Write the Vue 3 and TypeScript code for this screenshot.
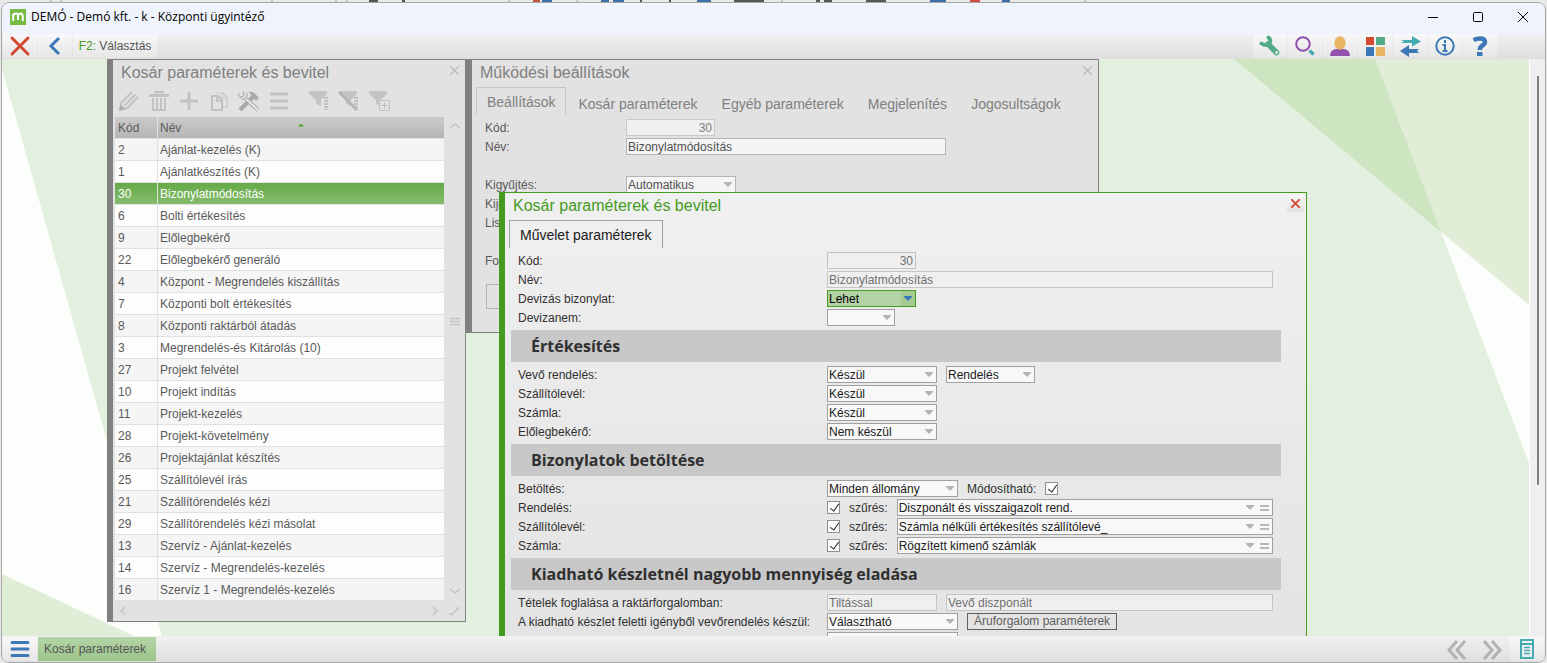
<script setup lang="ts">
import { reactive, ref } from 'vue'

interface Item { code: number; name: string }
interface Field {
  kind: 'text' | 'select' | 'lookup' | 'check' | 'button' | 'label'
  value?: string
  size?: string
  disabled?: boolean
  active?: boolean
  right?: boolean
}
interface Row { label: string; fields: Field[] }
interface Section { title?: string; rows: Row[] }

const items: Item[] = [
  { code: 2, name: 'Ajánlat-kezelés (K)' },
  { code: 1, name: 'Ajánlatkészítés (K)' },
  { code: 30, name: 'Bizonylatmódosítás' },
  { code: 6, name: 'Bolti értékesítés' },
  { code: 9, name: 'Előlegbekérő' },
  { code: 22, name: 'Előlegbekérő generáló' },
  { code: 4, name: 'Központ - Megrendelés kiszállítás' },
  { code: 7, name: 'Központi bolt értékesítés' },
  { code: 8, name: 'Központi raktárból átadás' },
  { code: 3, name: 'Megrendelés-és Kitárolás (10)' },
  { code: 27, name: 'Projekt felvétel' },
  { code: 10, name: 'Projekt indítás' },
  { code: 11, name: 'Projekt-kezelés' },
  { code: 28, name: 'Projekt-követelmény' },
  { code: 26, name: 'Projektajánlat készítés' },
  { code: 25, name: 'Szállítólevél írás' },
  { code: 21, name: 'Szállítórendelés kézi' },
  { code: 29, name: 'Szállítórendelés kézi másolat' },
  { code: 13, name: 'Szervíz - Ajánlat-kezelés' },
  { code: 14, name: 'Szervíz - Megrendelés-kezelés' },
  { code: 16, name: 'Szervíz 1 - Megrendelés-kezelés' },
]
const selected = ref(30)

const tabs = ['Beállítások', 'Kosár paraméterek', 'Egyéb paraméterek', 'Megjelenítés', 'Jogosultságok']
const tab = ref('Beállítások')

const sections = reactive<Section[]>([
  {
    rows: [
      { label: 'Kód:', fields: [{ kind: 'text', value: '30', size: 's', disabled: true, right: true }] },
      { label: 'Név:', fields: [{ kind: 'text', value: 'Bizonylatmódosítás', size: 'full', disabled: true }] },
      { label: 'Devizás bizonylat:', fields: [{ kind: 'select', value: 'Lehet', size: 's', active: true }] },
      { label: 'Devizanem:', fields: [{ kind: 'select', value: '', size: 'xs' }] },
    ],
  },
  {
    title: 'Értékesítés',
    rows: [
      { label: 'Vevő rendelés:', fields: [{ kind: 'select', value: 'Készül', size: 'm' }, { kind: 'select', value: 'Rendelés', size: 's' }] },
      { label: 'Szállítólevél:', fields: [{ kind: 'select', value: 'Készül', size: 'm' }] },
      { label: 'Számla:', fields: [{ kind: 'select', value: 'Készül', size: 'm' }] },
      { label: 'Előlegbekérő:', fields: [{ kind: 'select', value: 'Nem készül', size: 'm' }] },
    ],
  },
  {
    title: 'Bizonylatok betöltése',
    rows: [
      { label: 'Betöltés:', fields: [{ kind: 'select', value: 'Minden állomány', size: 'l' }, { kind: 'label', value: 'Módosítható:' }, { kind: 'check' }] },
      { label: 'Rendelés:', fields: [{ kind: 'check' }, { kind: 'label', value: 'szűrés:' }, { kind: 'lookup', value: 'Diszponált és visszaigazolt rend.' }] },
      { label: 'Szállítólevél:', fields: [{ kind: 'check' }, { kind: 'label', value: 'szűrés:' }, { kind: 'lookup', value: 'Számla nélküli értékesítés szállítólevé_' }] },
      { label: 'Számla:', fields: [{ kind: 'check' }, { kind: 'label', value: 'szűrés:' }, { kind: 'lookup', value: 'Rögzített kimenő számlák' }] },
    ],
  },
  {
    title: 'Kiadható készletnél nagyobb mennyiség eladása',
    rows: [
      { label: 'Tételek foglalása a raktárforgalomban:', fields: [{ kind: 'text', value: 'Tiltással', size: 'm', disabled: true }, { kind: 'text', value: 'Vevő diszponált', size: 'full', disabled: true }] },
      { label: 'A kiadható készlet feletti igényből vevőrendelés készül:', fields: [{ kind: 'select', value: 'Választható', size: 'l' }, { kind: 'button', value: 'Áruforgalom paraméterek' }] },
      { label: 'A készlet több raktárból kiadás esetén összevonva készül:', fields: [{ kind: 'select', value: 'Kérdéssel', size: 'l' }] },
    ],
  },
])
</script>

<template>
  <div class="screen">
    <svg class="behind" viewBox="0 0 1547 3" preserveAspectRatio="none" aria-hidden="true">
      <path d="M51 0v3M61 0v3M272 0v3M336 0v3M347 0v3M509 0v3M577 0v3M782 0v3M1085 0v3" stroke="#a5a5a5" />
      <path d="M369 1h9M402 1h3M640 1h2M669 1h2M734 1h30M816 1h4M824 1h8M866 1h20" stroke="#555" stroke-width="2" />
      <path d="M533 1h7" stroke="#c6533c" stroke-width="3" /><path d="M542 1h10M601 1h8M613 1h11M697 1h14M930 1h16M1002 1h8" stroke="#3c72a8" stroke-width="3" />
      <path d="M970 1h10" stroke="#d14b45" stroke-width="3" />
    </svg>
    <div class="app">
      <header class="titlebar">
        <svg class="logo" viewBox="0 0 16 16" aria-hidden="true"><rect width="16" height="16" fill="#76bb43" /><path d="M3.200 12V4.500M3.200 7.500Q3.500 4.500 6 4.500T8 7.500V11M8 7.500Q8.500 4.500 10.500 4.500T12.800 7.500V12" fill="none" stroke="#fff" stroke-width="2" /></svg>
        <h1>DEMÓ - Demó kft. - k - Központi ügyintéző</h1>
        <div class="syscmds">
          <button aria-label="Kis méret"><svg viewBox="0 0 12 12"><path d="M1 6.500h10" /></svg></button>
          <button aria-label="Teljes méret"><svg viewBox="0 0 12 12"><rect x="1.500" y="1.500" width="9" height="9" rx="1" /></svg></button>
          <button aria-label="Bezárás"><svg viewBox="0 0 12 12"><path d="M1 1l10 10M11 1L1 11" /></svg></button>
        </div>
      </header>

      <nav class="toolbar">
        <button class="tool" aria-label="Kilépés"><svg viewBox="0 0 22 22"><path d="M3 3l16 16M19 3L3 19" stroke="#d2492f" stroke-width="3" stroke-linecap="round" /></svg></button>
        <button class="tool" aria-label="Vissza"><svg viewBox="0 0 22 22"><path d="M15 3l-8 8 8 8" fill="none" stroke="#3c78b8" stroke-width="3" /></svg></button>
        <button class="tool wide"><span>F2:</span> Választás</button>
        <div class="tools">
          <button class="tool" aria-label="Beállítás"><svg viewBox="0 0 22 22"><path d="M9 9l8.500 8.500" stroke="#52ab86" stroke-width="5.500" stroke-linecap="round" /><path d="M2.500 8.500Q7 11.500 10 8.500T9.500 2.500" fill="none" stroke="#52ab86" stroke-width="3.800" stroke-linecap="round" /><circle cx="17.500" cy="17.500" r="1.400" fill="#f2f2f2" /></svg></button>
          <button class="tool" aria-label="Keresés"><svg viewBox="0 0 22 22"><circle cx="9" cy="9" r="6.800" fill="none" stroke="#9351ae" stroke-width="2" /><path d="M15.500 15.500l4 4" stroke="#45adb2" stroke-width="3.400" /></svg></button>
          <button class="tool" aria-label="Felhasználó"><svg viewBox="0 0 22 22"><path d="M1 21q0-6 6-7h8q6 1 6 7z" fill="#9351ae" /><ellipse cx="11" cy="8" rx="5.600" ry="6.800" fill="#eab560" /></svg></button>
          <button class="tool" aria-label="Modulok"><svg viewBox="0 0 22 22"><path d="M2 2h8v8H2z" fill="#d2492f" /><path d="M12 2h9v8h-9z" fill="#52ab86" /><path d="M2 12h8v9H2z" fill="#3c78b8" /><path d="M12 12h9v9h-9z" fill="#eab560" /></svg></button>
          <button class="tool" aria-label="Váltás"><svg viewBox="0 0 22 22"><path d="M2 5h11V1l9 5.500-9 5V8H2l3-1.500z" fill="#45adb2" /><path d="M20 14H10v-4l-9 6 9 6v-4h10l-2-2z" fill="#3c78b8" /></svg></button>
          <button class="tool" aria-label="Információ"><svg viewBox="0 0 22 22"><circle cx="11" cy="11" r="8.700" fill="none" stroke="#3c78b8" stroke-width="2" /><path d="M11 5v3M8.500 10H11v6M8.500 16h5" fill="none" stroke="#3c78b8" stroke-width="2" /></svg></button>
          <button class="tool" aria-label="Súgó"><svg viewBox="0 0 22 22"><path d="M4.500 5Q8 3.500 11 3.500Q16 3.500 16 7Q16 9 13 10.800Q10.800 12.200 10.800 15" fill="none" stroke="#3c78b8" stroke-width="4.500" /><path d="M8 17h5.500v4H8z" fill="#3c78b8" /></svg></button>
        </div>
      </nav>

      <div class="workspace">
        <main class="desktop">
          <svg class="wallpaper" viewBox="0 0 1527 577" preserveAspectRatio="none" aria-hidden="true">
            <path d="M0 10L160 577H0z" fill="#fbfefa" />
            <path d="M0 515L132 577H0z" fill="#e0edd7" />
            <path d="M1373 0H1527V246L1439 173z" fill="#e1edd7" />
            <path d="M1232 0h141l66 173z" fill="#cde5c1" />
            <path d="M1439 173l88 73v158z" fill="#fbfefa" />
          </svg>

          <section class="win list">
            <div class="caption">
              <h2>Kosár paraméterek és bevitel</h2>
              <button class="close" aria-label="Bezárás"><svg viewBox="0 0 10 10"><path d="M0 0l10 10M10 0L0 10" /></svg></button>
            </div>
            <div class="iconbar">
              <button aria-label="Szerkesztés"><svg viewBox="0 0 22 22"><path d="M3 13L14 2M6.500 15.500L17.500 4.500M9.500 18L20 7M3 13l-1 7 7.500-2" fill="none" stroke-width="2" /><path d="M1 20.500l1.500-6 5 4.500z" class="fill dark" /></svg></button>
              <button aria-label="Törlés"><svg viewBox="0 0 22 22"><path d="M1 5.500h20" stroke-width="3" /><path d="M7.500 5V2h7v3" stroke-width="2" /><path d="M5 8v12h12V8M9 8v12M13 8v12" stroke-width="2" /></svg></button>
              <button aria-label="Új"><svg viewBox="0 0 22 22"><path d="M11 2v18M2 11h18" stroke-width="3" /></svg></button>
              <button aria-label="Másolás"><svg viewBox="0 0 22 22"><path d="M4 6h6l4 4v10H4zM9 6v5h5" stroke-width="2" /><path d="M8 3h7l4 4v10h-4M14 3v5h5" stroke-width="2" opacity=".5" /></svg></button>
              <button aria-label="Eszközök"><svg viewBox="0 0 22 22"><path d="M2 20L16 6" stroke="#aaa" stroke-width="4" /><path d="M7 8l13 12" stroke="#aaa" stroke-width="4" /><path d="M7 8l13 12" stroke="#e8e8e8" stroke-width="2" /><path d="M5 1l1 5-4 1Q0 5 1 3M8 2q3 3 0 6T2 7" stroke="#aaa" /><path d="M11 2q5-1 8 4l2 2-3 3-5-6z" fill="#aaa" stroke="none" /></svg></button>
              <button aria-label="Menü"><svg viewBox="0 0 22 22"><path d="M2 4h18M2 11h18M2 18h18" stroke-width="3" /></svg></button>
              <button class="apart" aria-label="Szűrés"><svg viewBox="0 0 22 22"><path d="M1 1h18v3l-6 6v6l-5-2v-4L1 4z" class="fill" /><path d="M18 7v13" stroke-width="4" stroke-dasharray="2 1" /></svg></button>
              <button aria-label="Szűrés törlése"><svg viewBox="0 0 22 22"><path d="M1 1h18v3l-6 6v6l-5-2v-4L1 4z" class="fill" /><path d="M18 7v13" stroke-width="4" stroke-dasharray="2 1" /><path d="M1 2l18 18" stroke="#b5b5b5" stroke-width="3" /></svg></button>
              <button aria-label="Szűrés hozzáadása"><svg viewBox="0 0 22 22"><path d="M1 1h18v3l-6 6v6l-5-2v-4L1 4z" class="fill" /><path d="M11.500 10.500h10v10h-10zM16.500 12v7M13 15.500h7" class="plus" /></svg></button>
            </div>
            <div class="gridwrap">
              <table>
                <thead><tr><th class="code">Kód</th><th>Név<i class="sort"></i></th></tr></thead>
                <tbody>
                  <tr v-for="it in items" :key="it.code" :class="{ sel: it.code === selected }" @click="selected = it.code">
                    <td>{{ it.code }}</td><td>{{ it.name }}</td>
                  </tr>
                </tbody>
              </table>
              <div class="vscroll">
                <svg viewBox="0 0 12 12"><path d="M1 8l5-4 5 4" /></svg>
                <i class="upper"></i>
                <svg viewBox="0 0 12 12"><path d="M1 2.500h10M1 5.500h10M1 8.500h10" /></svg>
                <i class="lower"></i>
                <svg viewBox="0 0 12 12"><path d="M1 4l5 4 5-4" /></svg>
              </div>
            </div>
            <div class="hscroll">
              <svg viewBox="0 0 12 12"><path d="M8 2L4 6l4 4" /></svg>
              <svg class="end" viewBox="0 0 12 12"><path d="M4 2l4 4-4 4" /></svg>
              <svg viewBox="0 0 12 12"><path d="M1 8l3 2 7-8" /></svg>
            </div>
          </section>

          <section class="win settings">
            <div class="caption">
              <h2>Működési beállítások</h2>
              <button class="close" aria-label="Bezárás"><svg viewBox="0 0 10 10"><path d="M0 0l10 10M10 0L0 10" /></svg></button>
            </div>
            <div class="tabs" role="tablist">
              <button v-for="t in tabs" :key="t" role="tab" :class="{ on: t === tab }" :aria-selected="t === tab" @click="tab = t">{{ t }}</button>
            </div>
            <div class="form">
              <div class="row"><label for="s-kod">Kód:</label><input id="s-kod" class="box s right" value="30" disabled /></div>
              <div class="row"><label for="s-nev">Név:</label><input id="s-nev" class="box xl" value="Bizonylatmódosítás" /></div>
              <div class="row"></div>
              <div class="row"><label for="s-kigy">Kigyűjtés:</label><span class="pick m"><select id="s-kigy" class="box"><option>Automatikus</option></select></span></div>
              <div class="row"><label for="s-kij">Kijelölés:</label><input id="s-kij" class="box s" /></div>
              <div class="row"><label for="s-lis">Lista:</label><input id="s-lis" class="box s" /></div>
              <div class="row"></div>
              <div class="row"><label for="s-for">Forrás:</label><input id="s-for" class="box s" /></div>
            </div>
            <button class="bigbtn" aria-label="Mentés"></button>
          </section>

          <section class="win dialog">
            <div class="caption">
              <h2>Kosár paraméterek és bevitel</h2>
              <button class="close" aria-label="Bezárás"><svg viewBox="0 0 10 10"><path d="M0 0l10 10M10 0L0 10" /></svg></button>
            </div>
            <div class="tabs" role="tablist"><button class="on" role="tab" aria-selected="true">Művelet paraméterek</button></div>
            <div class="form">
              <template v-for="(sec, si) in sections" :key="si">
                <h3 v-if="sec.title">{{ sec.title }}</h3>
                <div v-for="(row, ri) in sec.rows" :key="ri" class="row">
                  <label :for="`f-${si}-${ri}-0`">{{ row.label }}</label>
                  <div class="fields">
                    <template v-for="(f, fi) in row.fields" :key="fi">
                      <input v-if="f.kind === 'text'" :id="`f-${si}-${ri}-${fi}`" :aria-label="row.label" class="box" :class="[f.size, { right: f.right }]" :value="f.value" :disabled="f.disabled" />
                      <span v-else-if="f.kind === 'select'" class="pick" :class="[f.size, { active: f.active }]">
                        <select :id="`f-${si}-${ri}-${fi}`" class="box" :aria-label="row.label"><option>{{ f.value }}</option></select>
                      </span>
                      <span v-else-if="f.kind === 'lookup'" class="pick lookup">
                        <select :id="`f-${si}-${ri}-${fi}`" class="box" aria-label="szűrés"><option>{{ f.value }}</option></select>
                        <button aria-label="Részletek"></button>
                      </span>
                      <input v-else-if="f.kind === 'check'" :id="`f-${si}-${ri}-${fi}`" type="checkbox" checked :aria-label="row.label" />
                      <button v-else-if="f.kind === 'button'" class="param">{{ f.value }}</button>
                      <label v-else class="mid" :for="`f-${si}-${ri}-${fi + 1}`">{{ f.value }}</label>
                    </template>
                  </div>
                </div>
              </template>
            </div>
          </section>
        </main>
        <div class="track"><div class="thumb"></div></div>
      </div>

      <footer class="taskbar">
        <button class="tool" aria-label="Menü"><svg viewBox="0 0 22 22"><path d="M3 4.500h16M3 11h16M3 17.500h16" stroke="#3c78b8" stroke-width="3" stroke-linecap="round" /></svg></button>
        <button class="task">Kosár paraméterek</button>
        <div class="tools">
          <button class="plain" aria-label="Előző"><svg viewBox="0 0 22 22"><path d="M11 2l-8 9 8 9M19 2l-8 9 8 9" /></svg></button>
          <button class="plain" aria-label="Következő"><svg viewBox="0 0 22 22"><path d="M3 2l8 9-8 9M11 2l8 9-8 9" /></svg></button>
          <button class="tool" aria-label="Napló"><svg viewBox="0 0 22 22"><path d="M5 2h12v18H5zM5 6h12" fill="none" stroke="#45adb2" stroke-width="2" /><path d="M8 9.500h6M8 12.500h6M8 15.500h6" stroke="#45adb2" stroke-width="1.500" /></svg></button>
        </div>
      </footer>
    </div>
  </div>
</template>

<style>
body { margin: 0; }
</style>

<style scoped>
* { box-sizing: border-box; }
.screen { position: relative; height: 100vh; padding: 2px 1px 0 1px; overflow: hidden; background: #e9e9e9; font: 12px/18px "Liberation Sans", Arial, sans-serif; color: #303030; }
.behind { position: absolute; left: 0; top: 0; width: 100%; height: 3px; }
button { font: inherit; color: inherit; border: 0; background: none; padding: 0; margin: 0; }
h1, h2, h3 { margin: 0; font-weight: 400; }
svg { display: block; }
.app { position: relative; display: flex; flex-direction: column; height: 100%; border: 1px solid #a8a8a8; border-radius: 8px; overflow: hidden; background: #efefef; }
.titlebar { display: flex; align-items: center; height: 31px; flex: none; padding: 0 0 3px 8px; background: #eff3fb; }
.logo { width: 16px; height: 16px; margin-right: 5px; }
h1 { font: 12px/20px "Open Sans", "Noto Sans", sans-serif; color: #000; }
.syscmds { display: flex; margin-left: auto; }
.syscmds button { display: grid; place-items: center; width: 45px; height: 28px; }
.syscmds svg { width: 12px; height: 12px; fill: none; stroke: #000; }
.toolbar, .taskbar { display: flex; flex: none; padding-left: 1px; background: linear-gradient(#f1f1f1, #dedede); }
.toolbar { height: 25px; }
.toolbar .tool { height: 24px; }
.tool { width: 34px; margin-right: 1px; display: grid; place-items: center; background: linear-gradient(#f8f8f8, #e6e6e6); }
.tool svg { width: 22px; height: 22px; }
.tool.wide { width: 84px; display: block; color: #555; }
.tool.wide span { color: #459b1f; }
.tools { display: flex; margin-left: auto; margin-right: 47px; }
.workspace { display: flex; flex: 1; min-height: 0; }
.desktop { position: relative; flex: 1; overflow: hidden; background: #e4f0df; }
.wallpaper { position: absolute; inset: 0; width: 100%; height: 100%; }
.track { width: 16px; border-left: 1px solid #fff; padding: 17px 0 0 7px; background: #efefef; }
.thumb { width: 2px; height: 73%; background: #808080; }

.win { position: absolute; border: 1px solid #808080; border-left-width: 6px; background: #e2e2e2; color: #5a5a5a; }
.list { left: 105px; top: 0; width: 359px; }
.settings { left: 464px; top: 0; width: 633px; height: 274px; overflow: hidden; }
.dialog { left: 497px; top: 133px; width: 808px; border-color: #459b1f; background: linear-gradient(#f0f0f0, #e3e3e3); color: #303030; }
.caption { display: flex; height: 26px; padding-left: 8px; }
.caption h2 { font-size: 16px; line-height: 25px; color: #808080; }
.dialog h2 { color: #459b1f; }
.close { margin: 2px 2px 0 auto; width: 17px; height: 17px; display: grid; place-items: center; }
.close svg { width: 9px; height: 9px; stroke: #bcbcbc; stroke-width: 1.500; }
.dialog .close { background: linear-gradient(#f8f8f8, #e0e0e0); }
.dialog .close svg { stroke: #d2492f; stroke-width: 2; }

.iconbar { display: flex; height: 31px; padding: 4px 0 0 5px; }
.iconbar button { width: 30px; height: 22px; }
.iconbar .apart { margin-left: 10px; }
.iconbar svg { width: 22px; height: 22px; fill: none; stroke: #c2c2c2; stroke-width: 1; }
.iconbar .fill { fill: #c4c4c4; stroke: none; }
.iconbar .dark { fill: #b0b0b0; }
.iconbar .plus { fill: #e2e2e2; }
.gridwrap { display: flex; padding-left: 2px; }
table { flex: 1; border-collapse: separate; border-spacing: 0; }
th, td { height: 22px; padding: 0 3px 0 2px; line-height: 20px; text-align: left; font-weight: 400; border-bottom: 1px solid #e0e0e0; }
th { background: linear-gradient(#cbcbcb, #b5b5b5); }
th.code { width: 43px; }
th:first-child, td:first-child { padding-left: 3px; border-right: 1px solid #e0e0e0; }
tbody td { background: #fdfdfd; }
tbody tr:nth-child(odd) td { background: #f5f5f5; }
tbody tr.sel td { background: linear-gradient(#65aa48, #85bc6c); color: #fff; }
.sort { display: block; width: 6px; height: 3px; margin: -14px auto 11px 138px; background: #52a52c; clip-path: polygon(50% 0, 100% 100%, 0 100%); }
.vscroll { width: 21px; display: flex; flex-direction: column; align-items: center; padding: 3px 0 4px; }
.upper { flex: 5; }
.lower { flex: 7; }
.vscroll svg, .hscroll svg { width: 12px; height: 12px; fill: none; stroke: #c4c4c4; stroke-width: 1.500; }
.hscroll { display: flex; align-items: center; height: 20px; padding: 0 5px 0 4px; }
.hscroll .end { margin-left: auto; margin-right: 7px; }

.tabs { display: flex; padding-left: 4px; font-size: 14px; color: #808080; }
.tabs button { height: 29px; padding: 5px 12px 0; }
.tabs button.on { height: 28px; padding: 0 10px; border: 1px solid #c6c6c6; border-bottom: 0; }
.settings .tabs { height: 31px; padding-top: 1px; }
.dialog .tabs { height: 32px; padding-top: 1px; color: #202020; }
.dialog .tabs button.on { border-color: #a0a0a0; }

.row { display: flex; align-items: center; height: 19px; }
.row > label { flex: none; }
.settings .form { padding: 1px 13px 0; }
.settings .row > label { width: 141px; }
.dialog .form { padding: 0 25px 0 6px; }
.dialog .row { padding: 0 8px 0 7px; }
.dialog .row > label { width: 309px; white-space: nowrap; }
h3 { height: 32px; margin: 3px 0; padding-left: 20px; background: #c8c8c8; font: 700 16px/32px "Open Sans", "Noto Sans", sans-serif; color: #303030; }
.fields { display: flex; flex: 1; align-items: center; gap: 9px; min-width: 0; }
.box { height: 17px; min-width: 0; margin: 0; padding: 0 1px; border: 1px solid #a0a0a0; border-radius: 0; background: #f8f8f8; color: #202020; font: inherit; line-height: 15px; outline: 0; appearance: none; }
.box:disabled { background: #efefef; border-color: #c4c4c4; color: #707070; }
.settings .box { background: #f5f5f5; border-color: #b4b4b4; color: #505050; }
.settings .box:disabled { background: #efefef; border-color: #cacaca; color: #808080; }
.right { text-align: right; }
.box.right { padding-right: 2px; }
.xs { width: 68px; }
.s { width: 89px; }
.m { width: 110px; }
.l { width: 131px; }
.xl { width: 320px; }
.full { flex: 1; }
.pick { position: relative; display: block; height: 17px; }
.pick .box { display: block; width: 100%; padding-top: 1px; }
.pick::after { content: ""; position: absolute; right: 4px; top: 6px; width: 8px; height: 5px; background: #b4b4b4; clip-path: polygon(0 0, 100% 0, 100% 20%, 50% 100%, 0 20%); pointer-events: none; }
.pick.active .box { border-color: #459b1f; background: linear-gradient(90deg, #b3d2a5 73px, #a3ca91 73px); color: #000; }
.pick.active::after { background: #3c78b8; }
.lookup { flex: 1; }
.lookup::after { right: 19px; }
.lookup button { position: absolute; right: 4px; top: 6px; width: 9px; height: 6px; border: solid #b8b8b8; border-width: 2px 0; }
input[type=checkbox] { appearance: none; position: relative; width: 13px; height: 13px; margin: 0; border: 1px solid #909090; background: #fbfbfb; }
input[type=checkbox]::after { content: ""; position: absolute; left: 4px; top: 0; width: 4px; height: 8px; border: solid #202020; border-width: 0 1px 1px 0; transform: rotate(35deg); }
.mid { white-space: nowrap; }
.param { height: 17px; padding: 0 6px; line-height: 15px; border: 1px solid #606060; color: #606060; background: #e4e4e4; }
.bigbtn { width: 90px; height: 25px; margin: 14px 0 0 14px; border: 1px solid #b4b4b4; }

.taskbar { height: 26px; padding-top: 1px; }
.taskbar .tool { height: 24px; }
.task { width: 118px; height: 24px; padding: 0 6px; text-align: left; background: linear-gradient(#b5d4a7, #9cc58a); color: #555; }
.taskbar .tools { margin-right: 0; gap: 1px; }
.plain { width: 34px; display: grid; place-items: center; }
.plain svg { width: 22px; height: 22px; fill: none; stroke: #b2b2b2; stroke-width: 3; }
</style>
